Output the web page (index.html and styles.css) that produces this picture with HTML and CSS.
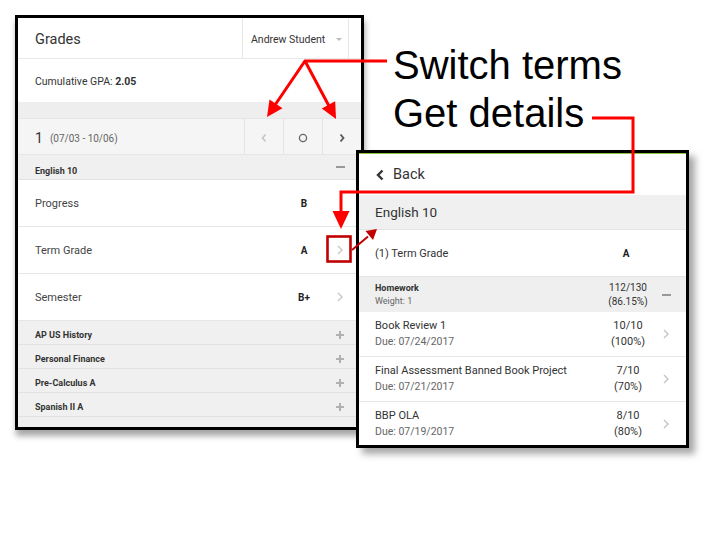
FILE: index.html
```html
<!DOCTYPE html>
<html>
<head>
<meta charset="utf-8">
<link rel="stylesheet" href="styles.css">
</head>
<body>
<div class="panel left">
  <div class="lp-head">
    <div class="title">Grades</div>
    <div class="student">Andrew Student <span class="caret"></span></div>
    <div class="head-pad"></div>
  </div>
  <div class="gpa">Cumulative GPA:&nbsp;<b>2.05</b></div>
  <div class="gap"></div>
  <div class="term">
    <span class="num">1</span><span class="dates">(07/03 - 10/06)</span>
    <div class="btns">
      <div class="btn"><svg width="8" height="10" viewBox="0 0 8 10"><path d="M5.5 1.5 L2.5 5 L5.5 8.5" fill="none" stroke="#c4c4c4" stroke-width="1.6"/></svg></div>
      <div class="btn"><svg width="10" height="10" viewBox="0 0 10 10"><circle cx="5" cy="5" r="3.6" fill="none" stroke="#666" stroke-width="1.3"/></svg></div>
      <div class="btn"><svg width="8" height="10" viewBox="0 0 8 10"><path d="M2.5 1.5 L5.5 5 L2.5 8.5" fill="none" stroke="#555" stroke-width="1.8"/></svg></div>
    </div>
  </div>
  <div class="course open"><span class="cname">English 10</span><span class="icon"><span class="minus"></span></span></div>
  <div class="row"><span class="label">Progress</span><span class="grade">B</span><span class="chev"></span></div>
  <div class="row"><span class="label">Term Grade</span><span class="grade">A</span><span class="chev"><svg width="8" height="12" viewBox="0 0 8 12"><path d="M2 2 L6 6 L2 10" fill="none" stroke="#c8c8c8" stroke-width="1.4"/></svg></span></div>
  <div class="row"><span class="label">Semester</span><span class="grade">B+</span><span class="chev"><svg width="8" height="12" viewBox="0 0 8 12"><path d="M2 2 L6 6 L2 10" fill="none" stroke="#c8c8c8" stroke-width="1.4"/></svg></span></div>
  <div class="course"><span class="cname">AP US History</span><span class="icon"><span class="plus"></span></span></div>
  <div class="course"><span class="cname">Personal Finance</span><span class="icon"><span class="plus"></span></span></div>
  <div class="course"><span class="cname">Pre-Calculus A</span><span class="icon"><span class="plus"></span></span></div>
  <div class="course"><span class="cname">Spanish II A</span><span class="icon"><span class="plus"></span></span></div>
  <div class="fill"></div>
</div>

<div class="panel right">
  <div class="rp-head"><svg width="10" height="12" viewBox="0 0 10 12"><path d="M7.5 1.5 L3 6 L7.5 10.5" fill="none" stroke="#333" stroke-width="2.4"/></svg><span>Back</span></div>
  <div class="rp-course">English 10</div>
  <div class="rp-term"><span class="label">(1) Term Grade</span><span class="grade">A</span><span class="chev"></span></div>
  <div class="rp-cat">
    <div class="info"><div class="strong">Homework</div><div class="sub">Weight: 1</div></div>
    <div class="score"><div>112/130</div><div>(86.15%)</div></div>
    <div class="chev"><span class="minus"></span></div>
  </div>
  <div class="item">
    <div class="info"><div>Book Review 1</div><div class="sub">Due: 07/24/2017</div></div>
    <div class="score"><div>10/10</div><div>(100%)</div></div>
    <div class="chev"><svg width="8" height="12" viewBox="0 0 8 12"><path d="M2 2 L6 6 L2 10" fill="none" stroke="#c4c4c4" stroke-width="1.4"/></svg></div>
  </div>
  <div class="item">
    <div class="info"><div>Final Assessment Banned Book Project</div><div class="sub">Due: 07/21/2017</div></div>
    <div class="score"><div>7/10</div><div>(70%)</div></div>
    <div class="chev"><svg width="8" height="12" viewBox="0 0 8 12"><path d="M2 2 L6 6 L2 10" fill="none" stroke="#c4c4c4" stroke-width="1.4"/></svg></div>
  </div>
  <div class="item">
    <div class="info"><div>BBP OLA</div><div class="sub">Due: 07/19/2017</div></div>
    <div class="score"><div>8/10</div><div>(80%)</div></div>
    <div class="chev"><svg width="8" height="12" viewBox="0 0 8 12"><path d="M2 2 L6 6 L2 10" fill="none" stroke="#c4c4c4" stroke-width="1.4"/></svg></div>
  </div>
</div>

<div class="callouts">
  <div class="callout-text">Switch terms<br>Get details</div>
  <svg class="callout-lines" width="720" height="540" viewBox="0 0 720 540">
    <g fill="none" stroke="#ff0000" stroke-width="3">
      <path d="M387 61 L305 61 L275 105"/>
      <path d="M305 61 L329 106"/>
      <path d="M592 118 L633 118 L633 192 L341 192 L341 212"/>
    </g>
    <g fill="#ff0000">
      <polygon points="267,117 282.5,108.2 269.5,99.4"/>
      <polygon points="336,119 335.2,101.2 321.8,108.4"/>
      <polygon points="332.5,211 349.5,211 341,229"/>
    </g>
    <rect x="327.5" y="236.5" width="23" height="25" fill="none" stroke="#c00000" stroke-width="2.6"/>
    <path d="M352 250 L368 236.5" fill="none" stroke="#c00000" stroke-width="2"/>
    <polygon points="377,229 373,240 365.5,231" fill="#c00000"/>
  </svg>
</div>
</body>
</html>
```

FILE: styles.css
```css
* { box-sizing: border-box; }

body {
  margin: 0;
  width: 720px;
  height: 540px;
  position: relative;
  overflow: hidden;
  background: #fff;
  font-family: Roboto, "Liberation Sans", sans-serif;
  color: #333;
}

.panel {
  position: absolute;
  border: 3px solid #000;
  background: #fff;
  overflow: hidden;
  display: flex;
  flex-direction: column;
}

/* ---------- left panel ---------- */
.left {
  left: 15px;
  top: 15px;
  width: 349px;
  height: 415px;
  box-shadow: 1px 6px 6px rgba(0, 0, 0, 0.35);
}

.lp-head {
  height: 41px;
  flex: none;
  display: flex;
  border-bottom: 1px solid #e8e8e8;
}
.lp-head .title {
  flex: 1;
  padding-left: 17px;
  padding-top: 3px;
  font-size: 14.5px;
  line-height: 37px;
  color: #333;
}
.lp-head .student {
  width: 107px;
  border-left: 1px solid #e6e6e6;
  border-right: 1px solid #e6e6e6;
  font-size: 10.5px;
  padding-left: 8px;
  padding-top: 2px;
  color: #333;
  display: flex;
  align-items: center;
  gap: 11px;
}
.caret {
  width: 0;
  height: 0;
  border-left: 3.5px solid transparent;
  border-right: 3.5px solid transparent;
  border-top: 3.5px solid #bbb;
}
.head-pad { width: 12px; }

.gpa {
  height: 43px;
  flex: none;
  padding-left: 17px;
  padding-top: 2px;
  font-size: 10.5px;
  line-height: 41px;
  color: #333;
  border-radius: 0 0 3px 3px;
  margin-right: 2px;
}
.gpa b { font-weight: 700; }

.gap {
  height: 16px;
  flex: none;
  background: #eeeeee;
}

.term {
  height: 37px;
  flex: none;
  display: flex;
  align-items: stretch;
  background: #f5f5f5;
  border-top: 1px solid #e6e6e6;
  border-bottom: 1px solid #e6e6e6;
  padding-left: 17px;
}
.term .num {
  font-size: 14px;
  color: #333;
  margin-right: 7px;
  align-self: center;
  padding-top: 3px;
}
.term .dates {
  font-size: 10px;
  color: #666;
  flex: 1;
  align-self: center;
  padding-top: 4px;
}
.btns {
  display: flex;
}
.btn {
  width: 39px;
  border-left: 1px solid #e4e4e4;
  display: flex;
  align-items: center;
  justify-content: center;
  padding-top: 2px;
}

.course {
  height: 24px;
  flex: none;
  display: flex;
  align-items: center;
  background: #f0f0f0;
  border-bottom: 1px solid #e2e2e2;
  padding-left: 17px;
  padding-top: 4px;
  font-size: 9px;
  font-weight: 700;
  color: #333;
}
.course.open { height: 25px; padding-top: 8px; }
.course .cname { flex: 1; }
.course .icon {
  width: 42px;
  display: flex;
  justify-content: center;
}
.course.open .icon { margin-top: -8px; }
.minus {
  width: 9px;
  height: 2px;
  background: #999;
}
.plus {
  width: 8px;
  height: 8px;
  background:
    linear-gradient(#b0b0b0, #b0b0b0) center / 8px 2px no-repeat,
    linear-gradient(#b0b0b0, #b0b0b0) center / 2px 8px no-repeat;
}

.row {
  height: 47px;
  flex: none;
  display: flex;
  align-items: center;
  border-bottom: 1px solid #e6e6e6;
  padding-left: 17px;
  font-size: 11px;
  color: #444;
}
.row .label { flex: 1; }
.row .grade {
  width: 30px;
  text-align: center;
  font-weight: 700;
  font-size: 10px;
  color: #222;
}
.row .chev {
  width: 42px;
  display: flex;
  justify-content: center;
}

.fill {
  flex: 1;
  background: #efefef;
}

/* ---------- right panel ---------- */
.right {
  left: 356px;
  top: 150px;
  width: 333px;
  height: 298px;
  box-shadow: 6px 6px 7px rgba(0, 0, 0, 0.35);
}
.rp-head {
  height: 42px;
  flex: none;
  border-top: 1px solid #8cc63f;
  display: flex;
  align-items: center;
  padding-left: 16px;
  gap: 8px;
  font-size: 14.5px;
  color: #333;
}
.rp-course {
  height: 35px;
  flex: none;
  background: #f0f0f0;
  padding-left: 16px;
  font-size: 13.5px;
  line-height: 35px;
  color: #333;
  border-bottom: 1px solid #e4e4e4;
}
.rp-term {
  height: 47px;
  flex: none;
  display: flex;
  align-items: center;
  padding-left: 16px;
  font-size: 11px;
  color: #333;
  border-bottom: 1px solid #e4e4e4;
}
.rp-term .label { flex: 1; }
.rp-term .grade {
  width: 44px;
  text-align: center;
  font-weight: 700;
  font-size: 10px;
  color: #222;
  margin-right: 4px;
}
.rp-term .chev { width: 34px; }

.rp-cat, .item {
  flex: none;
  display: flex;
  align-items: center;
  padding-left: 16px;
  padding-right: 6px;
}
.rp-cat {
  height: 35px;
  background: #efefef;
  font-size: 9px;
  color: #333;
}
.rp-cat .strong { font-weight: 700; margin-bottom: 3px; }
.rp-cat .sub { color: #666; }
.info { flex: 1; }
.score {
  width: 48px;
  text-align: center;
  line-height: 15px;
}
.rp-cat .score { font-size: 10px; line-height: 14px; }
.chev {
  width: 28px;
  display: flex;
  justify-content: center;
}

.item {
  height: 45px;
  font-size: 11px;
  color: #333;
  border-bottom: 1px solid #e6e6e6;
}
.item .info { line-height: 16px; }
.item .sub { color: #666; font-size: 10.5px; }
.item .score { font-size: 11px; line-height: 16px; color: #333; }

/* ---------- callouts ---------- */
.callouts {
  position: absolute;
  left: 0;
  top: 0;
  width: 720px;
  height: 540px;
  pointer-events: none;
}
.callout-text {
  position: absolute;
  left: 393px;
  top: 41px;
  font-family: "Liberation Sans", Arial, sans-serif;
  font-size: 40px;
  line-height: 48px;
  color: #000;
}
.callout-lines {
  position: absolute;
  left: 0;
  top: 0;
}
```
